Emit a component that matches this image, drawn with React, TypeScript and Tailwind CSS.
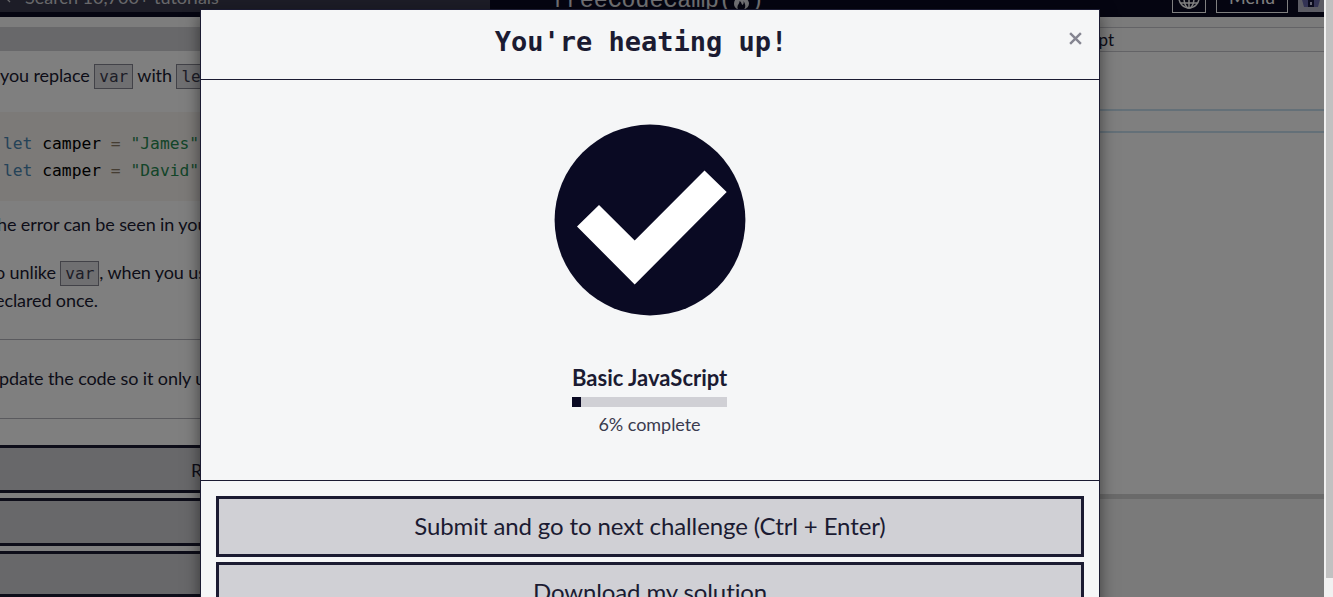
import React from 'react';

function Code({ children }: { children: React.ReactNode }) {
  return (
    <code className="inline-block h-[25px] w-[39px] border border-[#858591] bg-[#dfdfe2] px-1 text-center font-['DejaVu_Sans_Mono',monospace] text-[16px] leading-[23px] tracking-normal text-[#3b3b4f]">
      {children}
    </code>
  );
}

function CodeLine({ name }: { name: string }) {
  return (
    <div className="h-[27px] leading-[27px]">
      <span className="text-[#4a86b0]">let</span> camper <span className="text-[#8a7a66]">=</span>{' '}
      <span className="text-[#278a52]">"{name}"</span>;
    </div>
  );
}

function TopBar() {
  return (
    <header className="flex h-[17px] shrink-0 items-end overflow-hidden bg-[#0a0a23]">
      <div className="mb-[5px] flex h-[32px] w-[490px] shrink-0 items-center bg-[#3b3b4f] text-[#d0d0d5]">
        <svg className="-ml-px mt-[4px] h-[14px] w-[14px] shrink-0" viewBox="0 0 14 14" fill="none" stroke="currentColor" strokeWidth="1.3">
          <circle cx="4" cy="4" r="4" />
          <path d="M7 7l4 4" />
        </svg>
        <span className="ml-[12px] mt-[2px] whitespace-nowrap text-[18px] leading-[32px]">Search 10,700+ tutorials</span>
      </div>
      <div className="ml-[62px] flex h-[32px] w-[620px] shrink-0 items-start whitespace-nowrap font-['Liberation_Mono',monospace] text-[23.2px] leading-[32px] text-[#e4e4ea]">
        <span>freeCodeCamp(</span>
        <svg className="mt-[8px] h-[17px] w-[17px]" viewBox="0 0 17 17" fill="currentColor">
          <path d="M8 0C5 4 1 6 1 11c0 2.500 1.500 4.500 4 5.500C3 12 7 11 6.500 8 9 9 8 11 9.500 12c1-1 1.500-2 1-4 2 3 2.500 6 .5 8.500 3-1 5-3 5-6C16 6 10 4 8 0z" />
        </svg>
        <span>)</span>
      </div>
      <div className="mb-[4px] flex h-[32px] w-[34px] shrink-0 items-center justify-center border border-white text-white">
        <svg className="mt-[1px] h-[22px] w-[22px]" viewBox="0 0 22 22" fill="none" stroke="currentColor" strokeWidth="1.5">
          <circle cx="11" cy="11" r="10" />
          <ellipse cx="11" cy="11" rx="5" ry="10" />
          <path d="M11 1v20M1 11h20M3 5.500h16M3 16h16" />
        </svg>
      </div>
      <div className="mb-[4px] ml-[10px] flex h-[32px] w-[72px] shrink-0 items-center justify-center border border-white pt-px text-[18px] text-white">Menu</div>
      <div className="mb-[5px] ml-[10px] flex h-[32px] w-[26px] shrink-0 items-end justify-center bg-[#b9b9c9] pb-[4px]">
        <svg className="h-[12px] w-[20px]" viewBox="0 0 20 12">
          <path d="M0 0h20l-3 11H3z" fill="#6666a8" />
          <path d="M7 1h6v10H7z" fill="#15153a" />
          <path d="M9 6h2v3H9z" fill="#c9c9e8" />
        </svg>
      </div>
    </header>
  );
}

function Lesson() {
  return (
    <section className="flex w-[640px] shrink-0 flex-col whitespace-nowrap text-[18px] tracking-[-0.1px] text-[#1b1b32]">
      <div className="h-[10px] bg-[#fafafa]" />
      <div className="h-[25px] bg-[#d0d0d5]" />
      <p className="mt-[10px] h-[28px] leading-[28px]">
        you replace <Code>var</Code> with <Code>let</Code>
      </p>
      <div className="mt-[23px] h-[90px] bg-[#f8f4f0] pl-[3px] pt-[18px] font-['DejaVu_Sans_Mono',monospace] text-[16.3px] tracking-normal text-black">
        <CodeLine name="James" />
        <CodeLine name="David" />
      </div>
      <p className="-ml-[3px] mt-[9px] h-[28px] leading-[28px]">he error can be seen in your console.</p>
      <p className="-ml-[5px] mt-[20px] h-[56px] leading-[28px]">
        o unlike <Code>var</Code>, when you use
        <br />
        eclared once.
      </p>
      <div className="mt-[25px] border-t border-[#b5b5bd]" />
      <p className="-ml-[1px] mt-[24px] h-[28px] leading-[28px]">pdate the code so it only uses</p>
      <div className="mt-[26px] border-t border-[#b5b5bd]" />
      <div className="mt-[26px] flex flex-col gap-[5px]">
        <div className="h-[48px] border-y-[3px] border-[#1b1b32] bg-[#d0d0d5] pl-[191px] leading-[44px]">Run the Tests</div>
        <div className="h-[48px] border-y-[3px] border-[#1b1b32] bg-[#d0d0d5]" />
        <div className="h-[46px] border-y-[3px] border-[#1b1b32] bg-[#d0d0d5]" />
      </div>
    </section>
  );
}

function Editor() {
  return (
    <section className="flex w-[684px] shrink-0 flex-col bg-white text-[#1b1b32]">
      <div className="h-[10px] bg-[#f6f6f6]" />
      <div className="flex h-[25px] items-center justify-end border-y border-[#c6c6cc] bg-[#fafafa] pr-[210px] text-[17px]">JavaScript</div>
      <div className="h-[57px]" />
      <div className="h-[24px] border-y-2 border-[#c8e0f0]" />
      <div className="h-[361px]" />
      <div className="h-[5px] bg-[#d4d4d4]" />
      <div className="flex-1 bg-[#f4f4f4]" />
    </section>
  );
}

function Dialog() {
  return (
    <div className="flex h-[700px] w-[900px] flex-col border border-[#1b1b32] bg-[#f5f6f7] text-[#1b1b32] shadow-[0_5px_15px_rgba(0,0,0,0.5)]">
      <div className="grid h-[70px] shrink-0 grid-cols-[40px_1fr_40px] border-b border-[#1b1b32]">
        <span />
        <h1 className="pr-[18px] pt-[13px] text-center font-['DejaVu_Sans_Mono',monospace] text-[27px] font-bold leading-[38px]">You're heating up!</h1>
        <button className="flex h-[57px] items-center pl-[10px]" aria-label="Close">
          <svg className="h-[13px] w-[13px]" viewBox="0 0 14 14" fill="none" stroke="#858591" strokeWidth="2.600">
            <path d="M1.200 1.200l11.600 11.600M12.800 1.200L1.200 12.800" />
          </svg>
        </button>
      </div>
      <div className="flex h-[401px] shrink-0 flex-col items-center border-b border-[#1b1b32] pt-[44px]">
        <svg className="h-[192px] w-[192px] shrink-0" viewBox="0 0 192 192">
          <circle cx="96" cy="96" r="95.400" fill="#0a0a23" />
          <path d="M23 102.500L45 81l35.700 35.500L150.500 46.500 172.700 68 80.700 160.500z" fill="white" />
        </svg>
        <div className="mr-px mt-[48px] w-[155px] whitespace-nowrap text-center">
          <div className="text-[22px] font-bold leading-[28px]">Basic JavaScript</div>
          <div className="mt-[5px] h-[10px] bg-[#d0d0d5]">
            <div className="h-full w-[9px] bg-[#0a0a23]" />
          </div>
          <div className="mt-[3px] text-[18px] leading-[28px] tracking-[-0.05px] text-[#3b3b4f]">6% complete</div>
        </div>
      </div>
      <div className="flex flex-col gap-[5px] p-[15px] text-[24px] tracking-[-0.11px]">
        <button className="h-[61px] border-[3px] border-[#1b1b32] bg-[#d0d0d5] pb-[2px]">Submit and go to next challenge (Ctrl + Enter)</button>
        <button className="h-[61px] border-[3px] border-[#1b1b32] bg-[#d0d0d5] pb-[2px]">Download my solution</button>
      </div>
    </div>
  );
}

export default function App() {
  return (
    <div className="relative flex h-[597px] w-[1333px] overflow-hidden bg-white font-['Lato',sans-serif] [font-variant-ligatures:none]">
      <div className="flex w-[1324px] shrink-0 flex-col overflow-hidden">
        <TopBar />
        <main className="flex h-[580px] overflow-hidden">
          <Lesson />
          <Editor />
        </main>
      </div>
      <div className="absolute inset-y-0 left-0 w-[1324px] overflow-hidden bg-black/50 pl-[200px] pt-[9px]">
        <Dialog />
      </div>
      <div className="w-[9px] bg-[#f1f1f1] pl-[2px]">
        <div className="h-[578px] bg-[#c1c1c1]" />
      </div>
    </div>
  );
}
